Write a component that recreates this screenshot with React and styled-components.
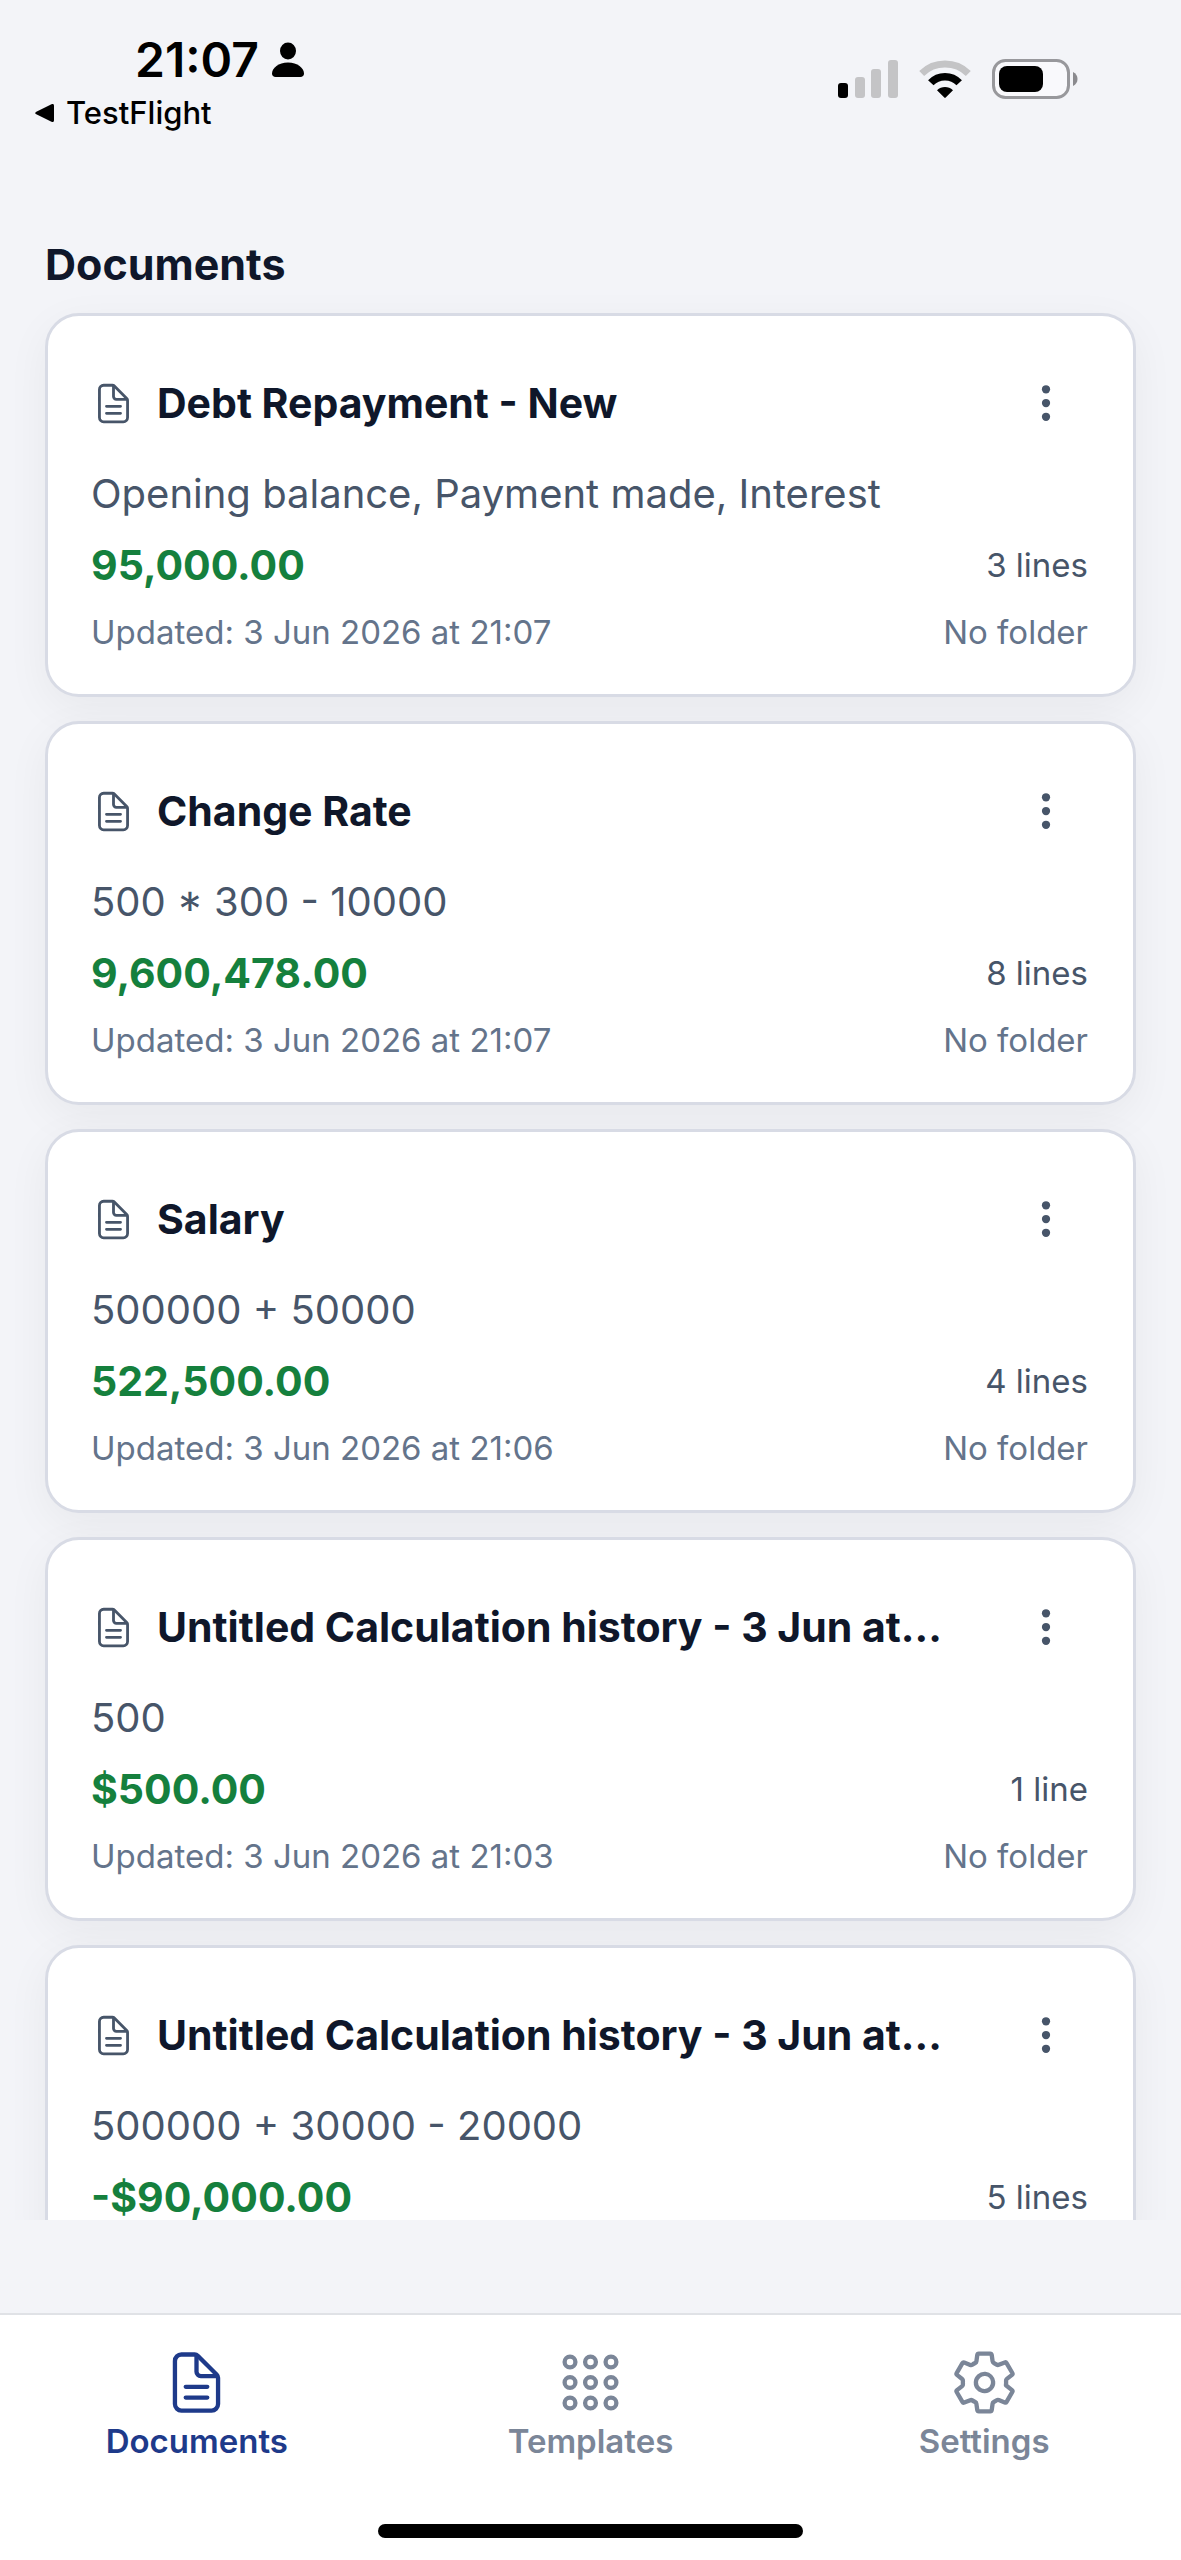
import styled, { createGlobalStyle } from "styled-components";
import {
  IoAppsOutline,
  IoDocumentTextOutline,
  IoEllipsisVertical,
  IoSettingsOutline,
} from "react-icons/io5";

const documents = [
  {
    id: 1,
    title: "Debt Repayment - New",
    preview: "Opening balance, Payment made, Interest",
    total: "95,000.00",
    lines: "3 lines",
    updated: "3 Jun 2026 at 21:07",
  },
  {
    id: 2,
    title: "Change Rate",
    preview: "500 * 300 - 10000",
    total: "9,600,478.00",
    lines: "8 lines",
    updated: "3 Jun 2026 at 21:07",
  },
  {
    id: 3,
    title: "Salary",
    preview: "500000 + 50000",
    total: "522,500.00",
    lines: "4 lines",
    updated: "3 Jun 2026 at 21:06",
  },
  {
    id: 4,
    title: "Untitled Calculation history - 3 Jun at...",
    preview: "500",
    total: "$500.00",
    lines: "1 line",
    updated: "3 Jun 2026 at 21:03",
  },
  {
    id: 5,
    title: "Untitled Calculation history - 3 Jun at...",
    preview: "500000 + 30000 - 20000",
    total: "-$90,000.00",
    lines: "5 lines",
  },
];

const tabs = [
  { label: "Documents", icon: IoDocumentTextOutline, active: true },
  { label: "Templates", icon: IoAppsOutline },
  { label: "Settings", icon: IoSettingsOutline },
];

const StatusBar = () => (
  <Status>
    <StatusLeft>
      <Clock>
        21:07
        <svg width="32" height="36" viewBox="0 0 32 36" aria-hidden="true">
          <ellipse cx="16" cy="9" rx="8" ry="8.5" />
          <path d="M16 20.5c9.5 0 16 5.600 16 11 0 2.200-1.400 3.500-3.600 3.500H3.600C1.400 35 0 33.700 0 31.500c0-5.400 6.500-11 16-11z" />
        </svg>
      </Clock>
      <BackLink href="#testflight">
        <svg width="20" height="20" viewBox="0 0 20 20" aria-hidden="true">
          <path d="M1.300 8.700 16.500 1.300C18 .6 19 1.200 19 2.800v14.400c0 1.600-1 2.200-2.500 1.500L1.300 11.300c-1.500-.8-1.500-1.800 0-2.600z" />
        </svg>
        TestFlight
      </BackLink>
    </StatusLeft>

    <StatusIcons>
      <svg width="60" height="38" viewBox="0 0 60 38" aria-hidden="true">
        <rect x="0" y="23" width="10" height="15" rx="3" />
        <rect x="17" y="17" width="10" height="21" rx="3" fill="#c4c4c6" />
        <rect x="33" y="9" width="10" height="29" rx="3" fill="#c4c4c6" />
        <rect x="50" y="0" width="10" height="38" rx="3" fill="#c4c4c6" />
      </svg>
      <svg width="52" height="38" viewBox="0 0 52 38" aria-hidden="true">
        <path d="M2.700 13.500C15.500 .9 36.500 .9 49.300 13.500" fill="none" stroke="#c4c4c6" strokeWidth="7" />
        <path d="M11.800 22.800C19.500 14.600 32.500 14.600 40.200 22.800" fill="none" stroke="#000" strokeWidth="7.500" />
        <path d="M18 30.200c4.500-4.400 11.500-4.400 16 0L26.700 37.500c-.5.500-.9.500-1.400 0z" />
      </svg>
      <svg width="86" height="40" viewBox="0 0 86 40" aria-hidden="true">
        <rect x="1.500" y="1.500" width="75" height="37" rx="12" fill="#f9f9fc" stroke="#98989c" strokeWidth="3" />
        <rect x="7" y="7" width="44" height="26" rx="8" />
        <path d="M81 13c6 2.500 6 11.500 0 14z" fill="#8a8a8e" />
      </svg>
    </StatusIcons>
  </Status>
);

const DocumentCard = ({ title, preview, total, lines, updated }) => (
  <Card>
    <CardHeader>
      <IoDocumentTextOutline size={45} />
      <CardTitle>{title}</CardTitle>
      <MenuButton type="button" aria-label={`Options for ${title}`}>
        <IoEllipsisVertical size={44} />
      </MenuButton>
    </CardHeader>
    <Preview>{preview}</Preview>
    <Row>
      <Total>{total}</Total>
      <Meta $dark>{lines}</Meta>
    </Row>
    {updated && (
      <Row>
        <Meta>Updated: {updated}</Meta>
        <Meta>No folder</Meta>
      </Row>
    )}
  </Card>
);

export default function App() {
  return (
    <>
      <GlobalStyle />
      <Screen>
        <StatusBar />
        <Heading>Documents</Heading>
        <List>
          {documents.map((doc) => (
            <DocumentCard key={doc.id} {...doc} />
          ))}
        </List>
        <TabBar>
          <Tabs>
            {tabs.map(({ label, icon: Icon, active }) => (
              <Tab key={label} href={`#${label.toLowerCase()}`} $active={active}>
                <Icon size={69} />
                {label}
              </Tab>
            ))}
          </Tabs>
          <HomeIndicator />
        </TabBar>
      </Screen>
    </>
  );
}

const GlobalStyle = createGlobalStyle`
  * {
    box-sizing: border-box;
  }

  body {
    margin: 0;
    background: #f3f4f8;
    font-family: Inter, "Liberation Sans", sans-serif;
  }

  h1, h2, p {
    margin: 0;
  }

  svg {
    flex-shrink: 0;
  }
`;

const Screen = styled.div`
  display: flex;
  flex-direction: column;
  height: 100vh;
`;

const Status = styled.header`
  display: flex;
  justify-content: space-between;
  align-items: flex-start;
  padding: 32px 103px 0 35px;
`;

const StatusLeft = styled.div`
  display: flex;
  flex-direction: column;
  gap: 6px;
`;

const Clock = styled.div`
  display: flex;
  align-items: center;
  gap: 13px;
  padding-left: 100px;
  font-size: 48px;
  font-weight: 600;
  line-height: 56px;
  color: #000;
`;

const BackLink = styled.a`
  display: flex;
  align-items: center;
  gap: 11px;
  font-size: 31px;
  font-weight: 500;
  line-height: 38px;
  color: #000;
  text-decoration: none;
`;

const StatusIcons = styled.div`
  display: flex;
  align-items: center;
  gap: 21px;
  padding-top: 27px;
`;

const Heading = styled.h1`
  padding: 107px 45px 0;
  font-size: 43px;
  font-weight: 700;
  line-height: 50px;
  color: #0f172a;
`;

const List = styled.main`
  display: flex;
  flex: 1;
  flex-direction: column;
  gap: 24px;
  min-height: 0;
  margin-bottom: 93px;
  padding: 24px 45px 0;
  overflow: hidden;
`;

const Card = styled.article`
  flex-shrink: 0;
  padding: 45px 45px 41px 43px;
  border: 3px solid #d8dbe5;
  border-radius: 34px;
  background: #fff;
  box-shadow: 0 12px 44px rgba(0, 0, 0, 0.05);
`;

const CardHeader = styled.div`
  display: flex;
  align-items: center;
  gap: 21px;
  margin-bottom: 24px;
  color: #475569;
`;

const CardTitle = styled.h2`
  flex: 1;
  min-width: 0;
  overflow: hidden;
  font-size: 41px;
  font-weight: 700;
  line-height: 50px;
  color: #0f172a;
  text-overflow: ellipsis;
  white-space: nowrap;
`;

const MenuButton = styled.button`
  display: flex;
  align-items: center;
  justify-content: center;
  width: 84px;
  height: 84px;
  padding: 0;
  border: 0;
  background: none;
  color: #475569;
`;

const Preview = styled.p`
  margin-bottom: 21px;
  font-size: 40px;
  line-height: 50px;
  color: #475569;
`;

const Row = styled.div`
  display: flex;
  align-items: center;
  justify-content: space-between;

  & + & {
    margin-top: 21px;
  }
`;

const Total = styled.strong`
  font-size: 41px;
  font-weight: 700;
  line-height: 50px;
  color: #15803d;
`;

const Meta = styled.span`
  font-size: 33px;
  line-height: 42px;
  color: ${(props) => (props.$dark ? "#475569" : "#64748b")};
`;

const TabBar = styled.footer`
  padding: 33px 0 22px;
  border-top: 2px solid #e0e2e6;
  background: #fff;
`;

const Tabs = styled.nav`
  display: grid;
  grid-template-columns: repeat(3, 1fr);
`;

const Tab = styled.a`
  display: flex;
  flex-direction: column;
  align-items: center;
  gap: 3px;
  font-size: 33px;
  font-weight: 600;
  line-height: 42px;
  color: ${(props) => (props.$active ? "#1e3a8a" : "#7b8698")};
  text-decoration: none;
`;

const HomeIndicator = styled.div`
  width: 36%;
  height: 14px;
  margin: 62px auto 0;
  border-radius: 7px;
  background: #000;
`;
